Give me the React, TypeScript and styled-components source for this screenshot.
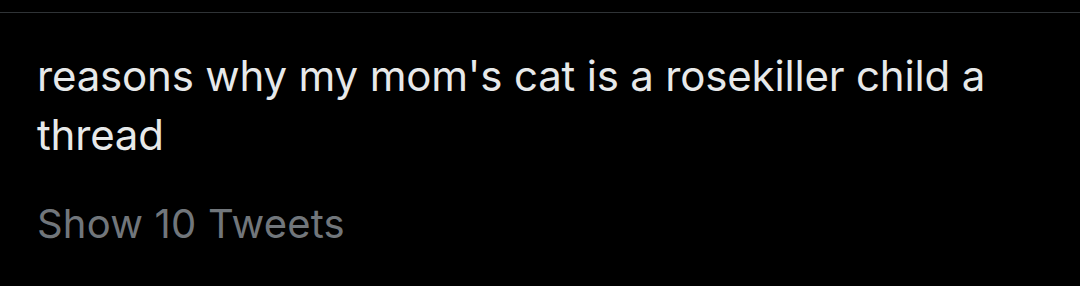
import { createGlobalStyle, styled } from 'styled-components';

const Global = createGlobalStyle`
  html, body {
    margin: 0;
    background: #000;
  }
`;

const Card = styled.div`
  width: 1080px;
  height: 286px;
  background: #000;
  padding-top: 12px;
  box-sizing: border-box;
`;

const Thread = styled.div`
  border-top: 1px solid #2f3336;
  padding: 33px 37px 0 37px;
  display: flex;
  flex-direction: column;
  font-family: Inter, "Liberation Sans", sans-serif;
`;

const Text = styled.p`
  margin: 0;
  width: 990px;
  color: #e7e9ea;
  font-size: 42px;
  line-height: 59px;
  letter-spacing: -0.18px;
`;

const ShowMore = styled.a`
  margin-top: 36px;
  color: #71767b;
  font-size: 40px;
  line-height: 48px;
  letter-spacing: 0.2px;
  cursor: pointer;
`;

export default function App() {
  return (
    <>
      <Global />
      <Card>
        <Thread>
          <Text>reasons why my mom's cat is a rosekiller child a thread</Text>
          <ShowMore>Show 10 Tweets</ShowMore>
        </Thread>
      </Card>
    </>
  );
}
